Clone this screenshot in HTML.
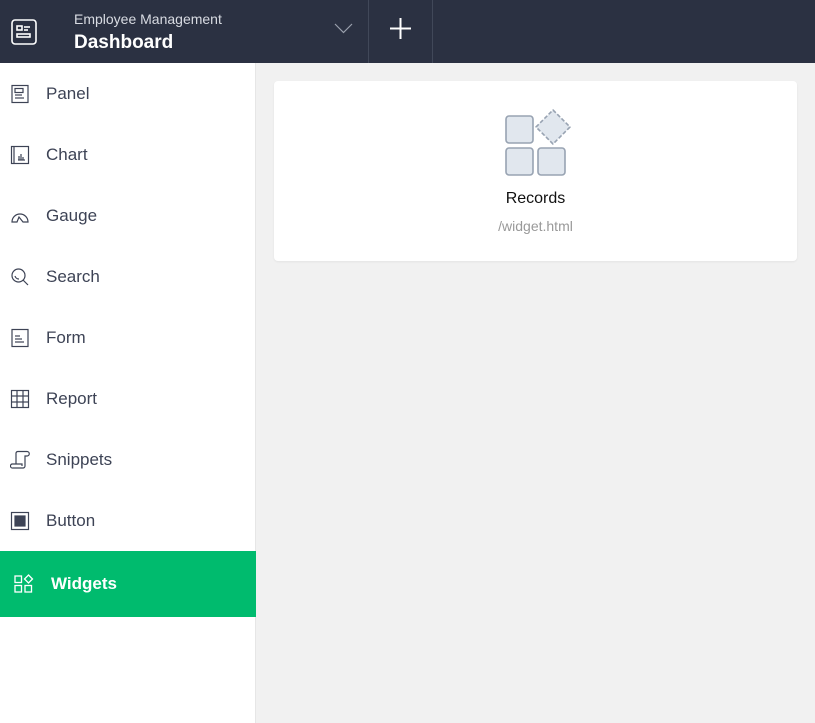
<!DOCTYPE html>
<html><head><style>
*{margin:0;padding:0;box-sizing:border-box}
body{width:815px;height:723px;overflow:hidden;background:#f1f1f1;font-family:"Liberation Sans",sans-serif;position:relative}
.hdr{position:absolute;left:0;top:0;width:815px;height:63px;background:#2b3142}
.sub{position:absolute;left:74px;top:11px;color:#d8dbe2;font-size:14px}
.ttl{position:absolute;left:74px;top:32px;color:#fff;font-size:19px;font-weight:bold}
.div{position:absolute;top:0;width:1px;height:63px;background:#414859}
.side{position:absolute;left:0;top:63px;width:256px;height:660px;background:#fff;border-right:1px solid #e6e6e6}
.it{position:absolute;left:0;width:256px;height:61px;color:#3d4355;font-size:17px}
.it span{position:absolute;left:46px;top:50%;transform:translateY(-50%)}
.it svg{position:absolute;left:10px;top:50%;transform:translateY(-50%)}
.act{background:#00bb6e;color:#fff;font-weight:bold;height:66px}
.act span{left:51px}
.card{position:absolute;left:274px;top:81px;width:523px;height:180px;background:#fff;border-radius:4px;box-shadow:0 1px 2px rgba(0,0,0,.06)}
</style></head><body>
<div class="hdr">
<svg style="position:absolute;left:11px;top:19px" width="26" height="26" viewBox="0 0 26 26" fill="none" stroke="#fff" stroke-width="1.6"><rect x="1" y="1" width="24" height="24" rx="3"/><rect x="6" y="7" width="5" height="4"/><line x1="13" y1="8" x2="19" y2="8"/><line x1="13" y1="11" x2="17" y2="11"/><rect x="6" y="15" width="13" height="3"/></svg>
<div class="sub">Employee Management</div>
<div class="ttl">Dashboard</div>
<svg style="position:absolute;left:334px;top:23px" width="19" height="11" viewBox="0 0 19 11" fill="none" stroke="#9aa0ad" stroke-width="1.2"><polyline points="1,1 9.5,9.5 18,1"/></svg>
<div class="div" style="left:368px"></div>
<svg style="position:absolute;left:390px;top:18px" width="21" height="21" viewBox="0 0 21 21" stroke="#fff" stroke-width="2"><line x1="10.5" y1="0" x2="10.5" y2="21"/><line x1="0" y1="10.5" x2="21" y2="10.5"/></svg>
<div class="div" style="left:432px"></div>
</div>
<div class="side">
<div class="it" style="top:0"><svg width="20" height="20" viewBox="0 0 20 20" fill="none" stroke="#3d4355" stroke-width="1.2"><rect x="2" y="1.5" width="16" height="17"/><rect x="5" y="4.5" width="8" height="4"/><line x1="5" y1="11" x2="12" y2="11"/><line x1="5" y1="14" x2="14" y2="14"/></svg><span>Panel</span></div>
<div class="it" style="top:61px"><svg width="20" height="20" viewBox="0 0 20 20" fill="none" stroke="#3d4355" stroke-width="1.2"><rect x="1.5" y="1.5" width="17" height="17"/><line x1="4" y1="2" x2="4" y2="18"/><line x1="9" y1="11" x2="9" y2="15"/><line x1="11" y1="9" x2="11" y2="15"/><line x1="13" y1="12" x2="13" y2="15"/><line x1="8" y1="15" x2="15" y2="15"/></svg><span>Chart</span></div>
<div class="it" style="top:122px"><svg width="20" height="20" viewBox="0 0 20 20" fill="none" stroke="#3d4355" stroke-width="1.2"><path d="M2 16 A8 8 0 0 1 18 16 L13 16 L9 11 L7 16 Z"/></svg><span>Gauge</span></div>
<div class="it" style="top:183px"><svg width="20" height="20" viewBox="0 0 20 20" fill="none" stroke="#3d4355" stroke-width="1.2"><circle cx="8.5" cy="8.5" r="6.5"/><line x1="13" y1="13" x2="18" y2="18"/><path d="M5 9 A4 4 0 0 0 9 12"/></svg><span>Search</span></div>
<div class="it" style="top:244px"><svg width="20" height="20" viewBox="0 0 20 20" fill="none" stroke="#3d4355" stroke-width="1.2"><rect x="2" y="1.5" width="16" height="17"/><line x1="5" y1="8" x2="10" y2="8"/><line x1="5" y1="11" x2="12" y2="11"/><line x1="5" y1="14" x2="14" y2="14"/></svg><span>Form</span></div>
<div class="it" style="top:305px"><svg width="20" height="20" viewBox="0 0 20 20" fill="none" stroke="#3d4355" stroke-width="1.2"><rect x="1.5" y="1.5" width="17" height="17"/><line x1="7" y1="2" x2="7" y2="18"/><line x1="13" y1="2" x2="13" y2="18"/><line x1="2" y1="7" x2="18" y2="7"/><line x1="2" y1="13" x2="18" y2="13"/></svg><span>Report</span></div>
<div class="it" style="top:366px"><svg width="20" height="20" viewBox="0 0 20 20" fill="none" stroke="#3d4355" stroke-width="1.2"><path d="M6 14 V3 A2 2 0 0 1 8 1.5 H17 A2 2 0 0 1 17 6 H15 V16 A2 2 0 0 1 13 18 H3 A2 2 0 0 1 2 14 H12 V16"/></svg><span>Snippets</span></div>
<div class="it" style="top:427px"><svg width="20" height="20" viewBox="0 0 20 20" fill="none" stroke="#3d4355" stroke-width="1.2"><rect x="1.5" y="1.5" width="17" height="17"/><rect x="5" y="5" width="10" height="10" fill="#3d4355"/></svg><span>Button</span></div>
<div class="it act" style="top:488px"><svg style="left:14px" width="20" height="20" viewBox="0 0 20 20" fill="none" stroke="#fff" stroke-width="1.3"><rect x="1" y="2" width="6.5" height="6.5"/><rect x="1" y="11.5" width="6.5" height="6.5"/><rect x="11" y="11.5" width="6.5" height="6.5"/><path d="M14.5 1 L18.5 5 L14.5 9 L10.5 5 Z"/></svg><span>Widgets</span></div>
</div>
<div class="card">
<svg style="position:absolute;left:231px;top:27px" width="68" height="68" viewBox="0 0 68 68" fill="#e1e7ee" stroke="#98a3b2" stroke-width="1.6"><rect x="1" y="8" width="27" height="27" rx="3"/><rect x="1" y="40" width="27" height="27" rx="3"/><rect x="33" y="40" width="27" height="27" rx="3"/><path d="M48 2 L65 19 L48 36 L31 19 Z" stroke-dasharray="4 2" stroke-linejoin="round"/></svg>
<div style="position:absolute;left:0;width:523px;top:109px;text-align:center;font-size:16px;color:#111">Records</div>
<div style="position:absolute;left:0;width:523px;top:137px;text-align:center;font-size:14px;color:#999">/widget.html</div>
</div>
</body></html>
